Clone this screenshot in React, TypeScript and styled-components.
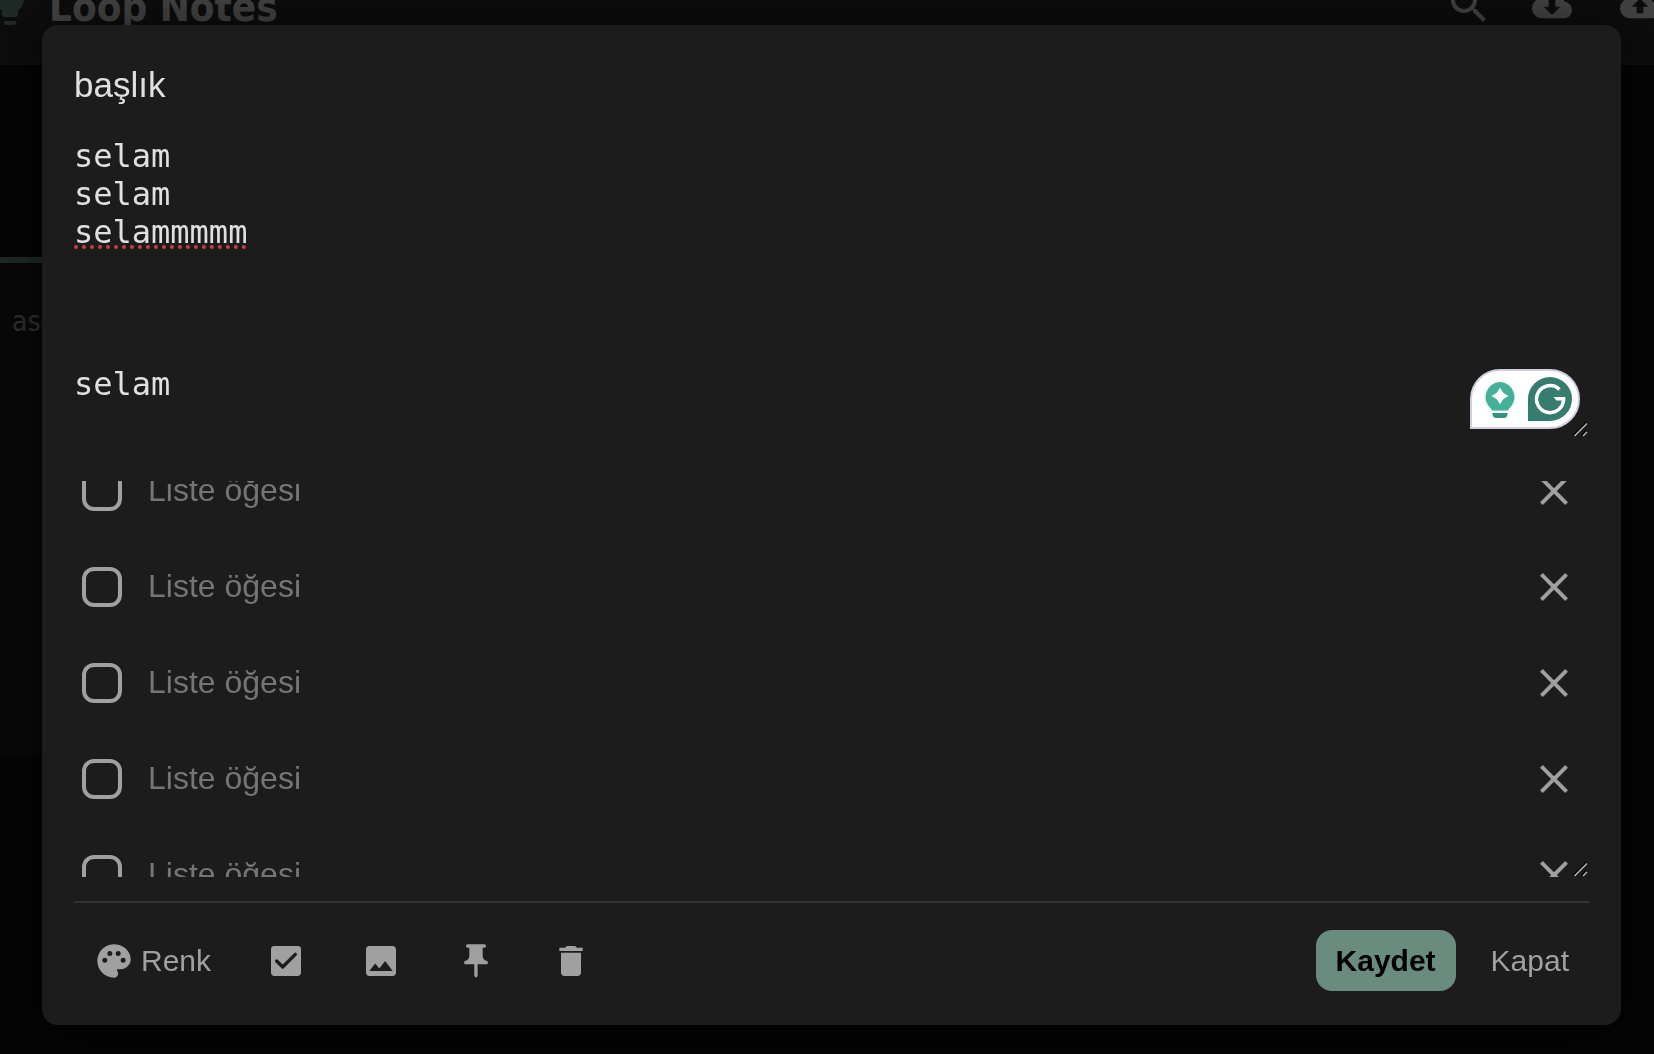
import React, { useLayoutEffect, useRef, useState } from "react";
import styled, { createGlobalStyle } from "styled-components";

const colors = {
  page: "#101010",
  card: "#1e1e1e",
  surface: "#1c1c1c",
  header: "#2a2a2a",
  line: "#333333",
  text: "#e0e0e0",
  muted: "#a0a0a0",
  faint: "#757575",
  accent: "#6a8c7f",
};

const sans = `"Liberation Sans", Arial, sans-serif`;
const display = `"DejaVu Sans Condensed", "Noto Sans", sans-serif`;

const GlobalStyle = createGlobalStyle`
  * { box-sizing: border-box; }
  html, body { margin: 0; background: #000; }
  body { font-family: ${sans}; overflow: hidden; }
  button { font: inherit; color: inherit; background: none; border: 0; padding: 0; margin: 0; cursor: pointer; }
  svg { display: block; flex: none; }
`;

const Page = styled.div`
  min-height: 100vh;
  overflow: hidden;
  background: ${colors.page};
  color: ${colors.text};
`;

const Header = styled.header`
  display: flex;
  align-items: center;
  height: 118px;
  margin: -53px -30px 192px;
  padding: 0 20px 0 16px;
  background: ${colors.header};
  border-bottom: 2px solid ${colors.line};
`;

const Brand = styled.h1`
  display: flex;
  align-items: center;
  gap: 15px;
  margin: 0;
  font-family: ${display};
  font-size: 40px;
  font-weight: 700;
  line-height: 48px;
  white-space: nowrap;
`;

const BrandName = styled.span`
  padding-top: 4px;
`;

const BrandMark = styled.span`
  color: ${colors.accent};
`;

const HeaderTools = styled.nav`
  display: flex;
  align-items: center;
  gap: 40px;
  margin-left: auto;
`;

const HeaderButton = styled.button<{ $width?: number }>`
  display: flex;
  align-items: center;
  justify-content: center;
  width: ${(p) => p.$width ?? 48}px;
  height: 48px;
`;

const NoteCard = styled.article`
  height: 499px;
  margin-right: 100px;
  padding: 40px 12px;
  background: ${colors.card};
  border-top: 6px solid ${colors.accent};
  color: ${colors.muted};
  font-family: ${display};
  font-size: 28px;
  line-height: 38px;
`;

const Overlay = styled.div`
  position: fixed;
  inset: 0;
  display: flex;
  padding: 25px 33px 29px 42px;
  background: rgba(0, 0, 0, 0.7);
`;

const Dialog = styled.section`
  flex: 1;
  min-width: 0;
  display: flex;
  flex-direction: column;
  padding: 32px;
  border-radius: 16px;
  background: ${colors.surface};
  color: ${colors.text};
  box-shadow: 0 8px 64px rgba(0, 0, 0, 0.6);
`;

const TitleInput = styled.input`
  width: 100%;
  height: 56px;
  padding: 8px 0;
  margin-bottom: 24px;
  border: 0;
  outline: 0;
  background: none;
  color: inherit;
  font-family: ${sans};
  font-size: 35px;
  line-height: 40px;
`;

const Editor = styled.div`
  position: relative;
  margin-bottom: 44px;
`;

const NoteText = styled.textarea`
  display: block;
  width: 100%;
  height: 300px;
  padding: 0;
  border: 0;
  outline: 0;
  resize: none;
  overflow: hidden;
  background: none;
  color: inherit;
  font-family: "DejaVu Sans Mono", monospace;
  font-size: 32px;
  line-height: 38px;
`;

const SpellingMark = styled.span`
  position: absolute;
  left: 0;
  top: 108px;
  width: 172px;
  border-bottom: 4px dotted #c2453b;
  pointer-events: none;
`;

const AssistantButton = styled.button`
  position: absolute;
  right: 9px;
  bottom: 8px;
  display: flex;
  align-items: center;
  justify-content: space-between;
  width: 110px;
  height: 60px;
  padding: 0 6px 0 11px;
  border: 2px solid #cfcfde;
  border-radius: 30px 30px 30px 0;
  background: #fff;
`;

const Grip = styled.svg`
  position: absolute;
  right: 1px;
  bottom: 0;
`;

const Checklist = styled.div`
  position: relative;
  flex: 1;
  min-height: 0;
  margin-bottom: 24px;
`;

const Items = styled.ul`
  position: absolute;
  inset: 0;
  margin: 0;
  padding: 0;
  list-style: none;
  overflow-y: auto;
  scrollbar-width: none;
`;

const Item = styled.li`
  display: flex;
  align-items: center;
  height: 96px;
  padding: 0 8px;
`;

const Tick = styled.input`
  appearance: none;
  flex: none;
  width: 40px;
  height: 40px;
  margin: 0 26px 0 0;
  border: 4px solid ${colors.muted};
  border-radius: 12px;
  cursor: pointer;
  &:checked {
    background: ${colors.accent};
  }
`;

const ItemInput = styled.input`
  flex: 1;
  min-width: 0;
  height: 48px;
  padding: 0 0 2px;
  border: 0;
  outline: 0;
  background: none;
  color: ${colors.text};
  font-family: ${sans};
  font-size: 32px;
  &::placeholder {
    color: ${colors.faint};
    opacity: 1;
  }
`;

const RemoveButton = styled.button`
  display: grid;
  place-items: center;
  width: 54px;
  height: 54px;
  color: ${colors.muted};
`;

const Footer = styled.footer`
  display: flex;
  align-items: center;
  justify-content: space-between;
  padding: 27px 0 2px;
  border-top: 2px solid ${colors.line};
`;

const ButtonGroup = styled.div`
  display: flex;
  align-items: center;
  gap: 15px;
`;

const ActionButton = styled.button<{ $primary?: boolean }>`
  && {
    display: flex;
    align-items: center;
    gap: 7px;
    height: 61px;
    padding: 0 20px;
    border-radius: 16px;
    background: ${(p) => (p.$primary ? colors.accent : "transparent")};
    color: ${(p) => (p.$primary ? "#000" : colors.muted)};
    font-size: 30px;
    font-weight: ${(p) => (p.$primary ? 700 : 400)};
  }
`;

const paths = {
  bulb: "M9 21c0 .55.45 1 1 1h4c.55 0 1-.45 1-1v-1H9v1zm3-19C8.14 2 5 5.14 5 9c0 2.38 1.19 4.47 3 5.74V17c0 .55.45 1 1 1h6c.55 0 1-.45 1-1v-2.26c1.81-1.27 3-3.36 3-5.74 0-3.86-3.14-7-7-7z",
  search:
    "M15.5 14h-.79l-.28-.27A6.47 6.47 0 0 0 16 9.5 6.5 6.5 0 1 0 9.5 16c1.61 0 3.09-.59 4.23-1.57l.27.28v.79l5 4.99L20.49 19l-4.99-5zm-6 0C7.01 14 5 11.99 5 9.5S7.01 5 9.5 5 14 7.01 14 9.5 11.99 14 9.5 14z",
  download:
    "M19.35 10.04A7.49 7.49 0 0 0 12 4C9.11 4 6.6 5.64 5.35 8.04A5.994 5.994 0 0 0 0 14c0 3.31 2.69 6 6 6h13c2.76 0 5-2.24 5-5 0-2.64-2.05-4.78-4.65-4.96zM17 13l-5 5-5-5h3V9h4v4h3z",
  upload:
    "M19.35 10.04A7.49 7.49 0 0 0 12 4C9.11 4 6.6 5.64 5.35 8.04A5.994 5.994 0 0 0 0 14c0 3.31 2.69 6 6 6h13c2.76 0 5-2.24 5-5 0-2.64-2.05-4.78-4.65-4.96zM14 13v4h-4v-4H7l5-5 5 5h-3z",
  close:
    "M19 6.41L17.59 5 12 10.59 6.41 5 5 6.41 10.59 12 5 17.59 6.41 19 12 13.41 17.59 19 19 17.59 13.41 12z",
  palette:
    "M12 2C6.49 2 2 6.49 2 12s4.49 10 10 10a2.5 2.5 0 0 0 2.5-2.5c0-.61-.23-1.2-.64-1.67a.528.528 0 0 1-.13-.33c0-.28.22-.5.5-.5H16c3.31 0 6-2.69 6-6C22 6.04 17.51 2 12 2zM6.5 13a1.5 1.5 0 1 1 0-3 1.5 1.5 0 0 1 0 3zm3-4a1.5 1.5 0 1 1 0-3 1.5 1.5 0 0 1 0 3zm5 0a1.5 1.5 0 1 1 0-3 1.5 1.5 0 0 1 0 3zm3 4a1.5 1.5 0 1 1 0-3 1.5 1.5 0 0 1 0 3z",
  checkbox:
    "M19 3H5a2 2 0 0 0-2 2v14c0 1.1.89 2 2 2h14c1.11 0 2-.9 2-2V5a2 2 0 0 0-2-2zm-8.290 13.290a1 1 0 0 1-1.410 0L5.710 12.700a1 1 0 0 1 0-1.410 1 1 0 0 1 1.410 0L10 14.170l6.880-6.880a1 1 0 0 1 1.410 0 1 1 0 0 1 0 1.410z",
  image:
    "M21 19V5c0-1.1-.9-2-2-2H5c-1.1 0-2 .9-2 2v14c0 1.1.9 2 2 2h14c1.1 0 2-.9 2-2zM8.500 13.500l2.500 3.010L14.500 12l4.500 6H5l3.500-4.500z",
  pin: "M16 9V4h1c.55 0 1-.45 1-1s-.45-1-1-1H7c-.55 0-1 .45-1 1s.45 1 1 1h1v5c0 1.66-1.34 3-3 3v2h5.97v7l1 1 1-1v-7H19v-2c-1.66 0-3-1.34-3-3z",
  trash:
    "M6 19c0 1.1.9 2 2 2h8c1.1 0 2-.9 2-2V7H6v12zM19 4h-3.5l-1-1h-5l-1 1H5v2h14V4z",
};

function Icon({ name, size }: { name: keyof typeof paths; size: number }) {
  return (
    <svg width={size} height={size} viewBox="0 0 24 24" fill="currentColor" aria-hidden="true">
      <path d={paths[name]} />
    </svg>
  );
}

function ResizeGrip() {
  return (
    <Grip width="16" height="16" viewBox="0 0 16 16" fill="none" aria-hidden="true">
      <path d="M1 14.500L14 1.500M9.500 14.500L14 10" stroke="#000" strokeWidth="1.500" />
      <path d="M2.500 15L15 2.500M11 15l4-4" stroke="#b4b4b4" strokeWidth="1.500" />
    </Grip>
  );
}

function TipBulb() {
  return (
    <svg width="34" height="42" viewBox="0 -1 34 42" aria-hidden="true">
      <defs>
        <radialGradient id="bulbGlow">
          <stop offset="0.7" stopColor="#45b59c" stopOpacity="0.3" />
          <stop offset="1" stopColor="#45b59c" stopOpacity="0" />
        </radialGradient>
      </defs>
      <circle cx="17" cy="18" r="17" fill="url(#bulbGlow)" />
      <path d="M17 3a15 15 0 0 0-9 26.500l1 2h16l1-2A15 15 0 0 0 17 3z" fill="#43b097" />
      <path d="M17 8.500c2.500 5 3.500 6 8.500 8.500-5 2.500-6 3.500-8.500 8.500-2.500-5-3.500-6-8.500-8.500 5-2.500 6-3.500 8.500-8.500z" fill="#fff" />
      <path d="M9.500 34h15v1a4 4 0 0 1-4 4h-7a4 4 0 0 1-4-4z" fill="#35917b" />
    </svg>
  );
}

function AssistantMark() {
  return (
    <svg width="44" height="44" viewBox="0 0 44 44" fill="none" aria-hidden="true">
      <path d="M22 0a22 22 0 0 1 0 44H0V22A22 22 0 0 1 22 0z" fill="#377d6f" />
      <path d="M31.500 12.500A13.500 13.500 0 1 0 35.500 21.500" stroke="#fff" strokeWidth="3.500" />
      <path d="M37.300 20v3.500H28.500l-3-3.500z" fill="#fff" />
    </svg>
  );
}

const noteBody = "selam\nselam\nselammmmm\n\n\n\nselam";

export default function App() {
  const listRef = useRef<HTMLUListElement>(null);
  const [items, setItems] = useState([1, 2, 3, 4, 5, 6]);

  useLayoutEffect(() => {
    if (listRef.current) listRef.current.scrollTop = 38;
  }, []);

  return (
    <>
      <GlobalStyle />
      <Page>
        <Header>
          <Brand>
            <BrandMark>
              <Icon name="bulb" size={48} />
            </BrandMark>
            <BrandName>Loop Notes</BrandName>
          </Brand>
          <HeaderTools>
            <HeaderButton $width={38} aria-label="Ara">
              <Icon name="search" size={48} />
            </HeaderButton>
            <HeaderButton aria-label="İndir">
              <Icon name="download" size={40} />
            </HeaderButton>
            <HeaderButton aria-label="Yükle">
              <Icon name="upload" size={40} />
            </HeaderButton>
          </HeaderTools>
        </Header>
        <NoteCard>asd</NoteCard>
      </Page>

      <Overlay>
        <Dialog role="dialog" aria-modal="true" aria-label="Not">
          <TitleInput aria-label="Başlık" defaultValue="başlık" />
          <Editor>
            <NoteText aria-label="Not metni" defaultValue={noteBody} spellCheck={false} />
            <SpellingMark />
            <AssistantButton aria-label="Grammarly">
              <TipBulb />
              <AssistantMark />
            </AssistantButton>
            <ResizeGrip />
          </Editor>
          <Checklist>
            <Items ref={listRef}>
              {items.map((id) => (
                <Item key={id}>
                  <Tick type="checkbox" aria-label={`Tamamlandı ${id}`} />
                  <ItemInput placeholder="Liste öğesi" aria-label={`Liste öğesi ${id}`} />
                  <RemoveButton
                    aria-label={`Sil ${id}`}
                    onClick={() => setItems(items.filter((other) => other !== id))}
                  >
                    <Icon name="close" size={48} />
                  </RemoveButton>
                </Item>
              ))}
            </Items>
            <ResizeGrip />
          </Checklist>
          <Footer>
            <ButtonGroup>
              <ActionButton>
                <Icon name="palette" size={40} />
                Renk
              </ActionButton>
              <ActionButton aria-label="Liste">
                <Icon name="checkbox" size={40} />
              </ActionButton>
              <ActionButton aria-label="Resim">
                <Icon name="image" size={40} />
              </ActionButton>
              <ActionButton aria-label="Sabitle">
                <Icon name="pin" size={40} />
              </ActionButton>
              <ActionButton aria-label="Notu sil">
                <Icon name="trash" size={40} />
              </ActionButton>
            </ButtonGroup>
            <ButtonGroup>
              <ActionButton $primary>Kaydet</ActionButton>
              <ActionButton>Kapat</ActionButton>
            </ButtonGroup>
          </Footer>
        </Dialog>
      </Overlay>
    </>
  );
}
